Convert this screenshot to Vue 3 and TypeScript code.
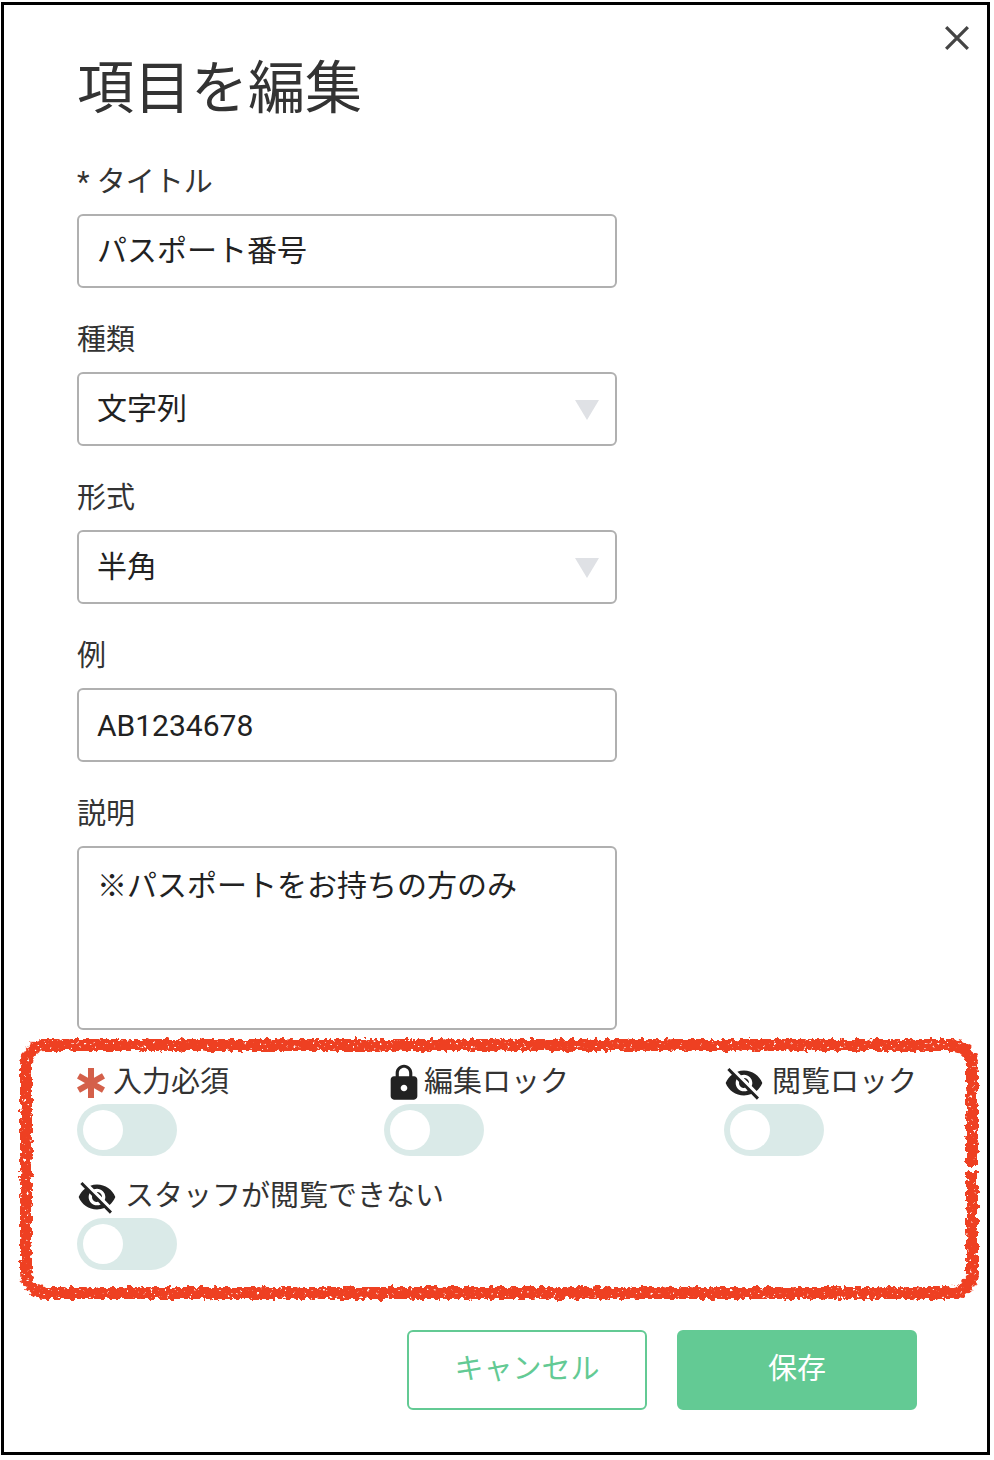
<script setup lang="ts">
import { reactive, ref } from 'vue'

type IconName = 'asterisk' | 'lock' | 'hidden'

interface ToggleOption {
  id: string
  label: string
  icon: IconName
  checked: boolean
}

const title = ref('パスポート番号')
const kind = ref('文字列')
const format = ref('半角')
const example = ref('AB1234678')
const description = ref('※パスポートをお持ちの方のみ')

const toggles = reactive<ToggleOption[]>([
  { id: 'required', label: '入力必須', icon: 'asterisk', checked: false },
  { id: 'edit-lock', label: '編集ロック', icon: 'lock', checked: false },
  { id: 'view-lock', label: '閲覧ロック', icon: 'hidden', checked: false },
  { id: 'staff-hidden', label: 'スタッフが閲覧できない', icon: 'hidden', checked: false },
])
</script>

<template>
  <form class="dialog" role="dialog" aria-labelledby="dialog-title" @submit.prevent>
    <button class="close" type="button" aria-label="閉じる">
      <svg viewBox="0 0 24 24" aria-hidden="true"><path d="M2 2L22 22M22 2L2 22" /></svg>
    </button>
    <h1 id="dialog-title">項目を編集</h1>

    <div class="fields">
      <div class="field">
        <label for="title">* タイトル</label>
        <input id="title" v-model="title" class="control japanese" type="text" />
      </div>
      <div class="field">
        <label for="kind">種類</label>
        <div class="select">
          <select id="kind" v-model="kind" class="control">
            <option>文字列</option>
          </select>
          <span class="arrow"></span>
        </div>
      </div>
      <div class="field">
        <label for="format">形式</label>
        <div class="select">
          <select id="format" v-model="format" class="control">
            <option>半角</option>
          </select>
          <span class="arrow"></span>
        </div>
      </div>
      <div class="field">
        <label for="example">例</label>
        <input id="example" v-model="example" class="control" type="text" />
      </div>
      <div class="field">
        <label for="description">説明</label>
        <textarea id="description" v-model="description" class="control area"></textarea>
      </div>
    </div>

    <section class="options">
      <div v-for="t in toggles" :key="t.id" class="option">
        <label :for="t.id" :class="t.icon">
          <svg v-if="t.icon === 'asterisk'" class="icon" viewBox="0 0 28 30" aria-hidden="true">
            <path d="M14 0V30M1.500 7.800L26.500 22.200M26.500 7.800L1.500 22.200" />
          </svg>
          <svg v-else-if="t.icon === 'lock'" class="icon" viewBox="0 0 24 24" aria-hidden="true">
            <path d="M18 8h-1V6c0-2.760-2.240-5-5-5S7 3.240 7 6v2H6c-1.100 0-2 .9-2 2v10c0 1.100.9 2 2 2h12c1.100 0 2-.9 2-2V10c0-1.100-.9-2-2-2zm-6 9c-1.100 0-2-.9-2-2s.9-2 2-2 2 .9 2 2-.9 2-2 2zm3.100-9H8.900V6c0-1.710 1.390-3.100 3.100-3.100s3.100 1.390 3.100 3.100v2z" />
          </svg>
          <svg v-else class="icon" viewBox="0 0 24 24" aria-hidden="true">
            <path d="M12 7c2.760 0 5 2.240 5 5 0 .65-.13 1.260-.36 1.830l2.920 2.920c1.510-1.260 2.700-2.890 3.430-4.750-1.730-4.390-6-7.500-11-7.500-1.400 0-2.740.25-3.980.7l2.160 2.160C10.740 7.130 11.350 7 12 7zM2 4.270l2.280 2.280.46.46C3.080 8.300 1.780 10.020 1 12c1.730 4.390 6 7.500 11 7.500 1.550 0 3.030-.3 4.380-.84l.42.42L19.730 22 21 20.730 3.270 3 2 4.270zM7.530 9.800l1.550 1.550c-.05.21-.08.43-.08.65 0 1.660 1.340 3 3 3 .22 0 .44-.03.65-.08l1.550 1.550c-.67.33-1.410.53-2.200.53-2.760 0-5-2.240-5-5 0-.79.2-1.530.53-2.200zm4.310-.78l3.150 3.150.02-.16c0-1.660-1.340-3-3-3l-.17.01z" />
          </svg>
          <span>{{ t.label }}</span>
        </label>
        <input :id="t.id" v-model="t.checked" class="switch" type="checkbox" role="switch" />
      </div>
      <div class="marker" aria-hidden="true"></div>
    </section>

    <div class="actions">
      <button class="cancel" type="button">キャンセル</button>
      <button class="save" type="submit">保存</button>
    </div>

    <svg class="defs" width="0" height="0" aria-hidden="true">
      <filter id="crayon" x="-2%" y="-5%" width="104%" height="110%">
        <feTurbulence type="fractalNoise" baseFrequency="0.2" numOctaves="2" seed="7" result="noise" />
        <feDisplacementMap in="SourceGraphic" in2="noise" scale="8" xChannelSelector="R" yChannelSelector="G" result="rough" />
        <feTurbulence type="fractalNoise" baseFrequency="0.3" numOctaves="2" seed="21" />
        <feColorMatrix values="0 0 0 0 0  0 0 0 0 0  0 0 0 0 0  -10 0 0 0 7.800" result="grain" />
        <feComposite in="rough" in2="grain" operator="in" />
      </filter>
    </svg>
  </form>
</template>

<style>
body {
  background: #fff;
}
</style>

<style scoped>
.dialog {
  position: relative;
  box-sizing: border-box;
  margin: 2px 4px 5px 1px;
  padding: 44px 70px 42px 73px;
  border: 3px solid #000;
  background: #fff;
  color: #333;
  font-family: Roboto, "Noto Sans CJK JP", sans-serif;
  font-size: 29px;
  line-height: 40px;
}
.dialog *,
.marker::after {
  box-sizing: border-box;
}
.close {
  position: absolute;
  top: 20px;
  right: 17px;
  display: flex;
  padding: 0;
  border: 0;
  background: none;
  cursor: pointer;
}
.close svg {
  width: 26px;
  height: 26px;
  fill: none;
  stroke: #444;
  stroke-width: 3;
}
h1 {
  margin: 0 0 33px;
  font-size: 57px;
  font-weight: 400;
  line-height: 80px;
}
.fields {
  display: flex;
  flex-direction: column;
  gap: 32px;
  max-width: 540px;
}
.field {
  display: flex;
  flex-direction: column;
  gap: 12px;
}
.control {
  display: block;
  width: 100%;
  height: 74px;
  margin: 0;
  padding: 0 18px;
  border: 2px solid #b0b0b0;
  border-radius: 6px;
  outline: 0;
  background: #fff;
  color: #222;
  font-family: inherit;
  font-size: 30px;
  line-height: 40px;
}
.japanese {
  padding-bottom: 6px;
}
.area {
  height: 184px;
  padding-top: 18px;
  resize: none;
}
.select {
  position: relative;
}
.select .control {
  appearance: none;
}
.arrow {
  position: absolute;
  top: 28px;
  right: 18px;
  width: 24px;
  height: 20px;
  background: #dfe1e5;
  clip-path: polygon(0 0, 100% 0, 50% 100%);
  pointer-events: none;
}
.options {
  position: relative;
  display: flex;
  flex-wrap: wrap;
  justify-content: space-between;
  gap: 18px 40px;
  margin-top: 30px;
}
.option label {
  display: flex;
  align-items: center;
  gap: 8px;
  height: 44px;
}
.option label.lock {
  gap: 0;
}
.icon {
  width: 40px;
  height: 40px;
  margin-top: 2px;
  fill: #222;
}
.asterisk .icon {
  width: 28px;
  height: 30px;
  fill: none;
  stroke: #d4604a;
  stroke-width: 6;
}
.switch {
  appearance: none;
  display: block;
  width: 100px;
  height: 52px;
  margin: 0;
  padding: 6px;
  border-radius: 26px;
  background: #daeae8;
  cursor: pointer;
}
.switch::before {
  content: "";
  display: block;
  width: 40px;
  height: 40px;
  border-radius: 50%;
  background: #fff;
}
.switch:checked {
  background: #63ca94;
}
.switch:checked::before {
  margin-left: auto;
}
.marker {
  position: absolute;
  inset: -21px -61px -29px -57px;
  border: 12px solid #ee4023;
  border-radius: 26px;
  filter: url(#crayon);
  pointer-events: none;
}
.marker::after {
  content: "";
  position: absolute;
  top: 115px;
  right: -15px;
  width: 18px;
  height: 5px;
  background: #fff;
}
.actions {
  display: flex;
  justify-content: flex-end;
  gap: 30px;
  margin-top: 60px;
}
.actions button {
  width: 240px;
  height: 80px;
  padding: 0 0 2px;
  border: 2px solid #63ca94;
  border-radius: 6px;
  background: #fff;
  color: #63ca94;
  font-family: inherit;
  font-size: 29px;
  line-height: 40px;
  cursor: pointer;
}
.actions .save {
  background: #63ca94;
  color: #fff;
}
.defs {
  position: absolute;
}
</style>
